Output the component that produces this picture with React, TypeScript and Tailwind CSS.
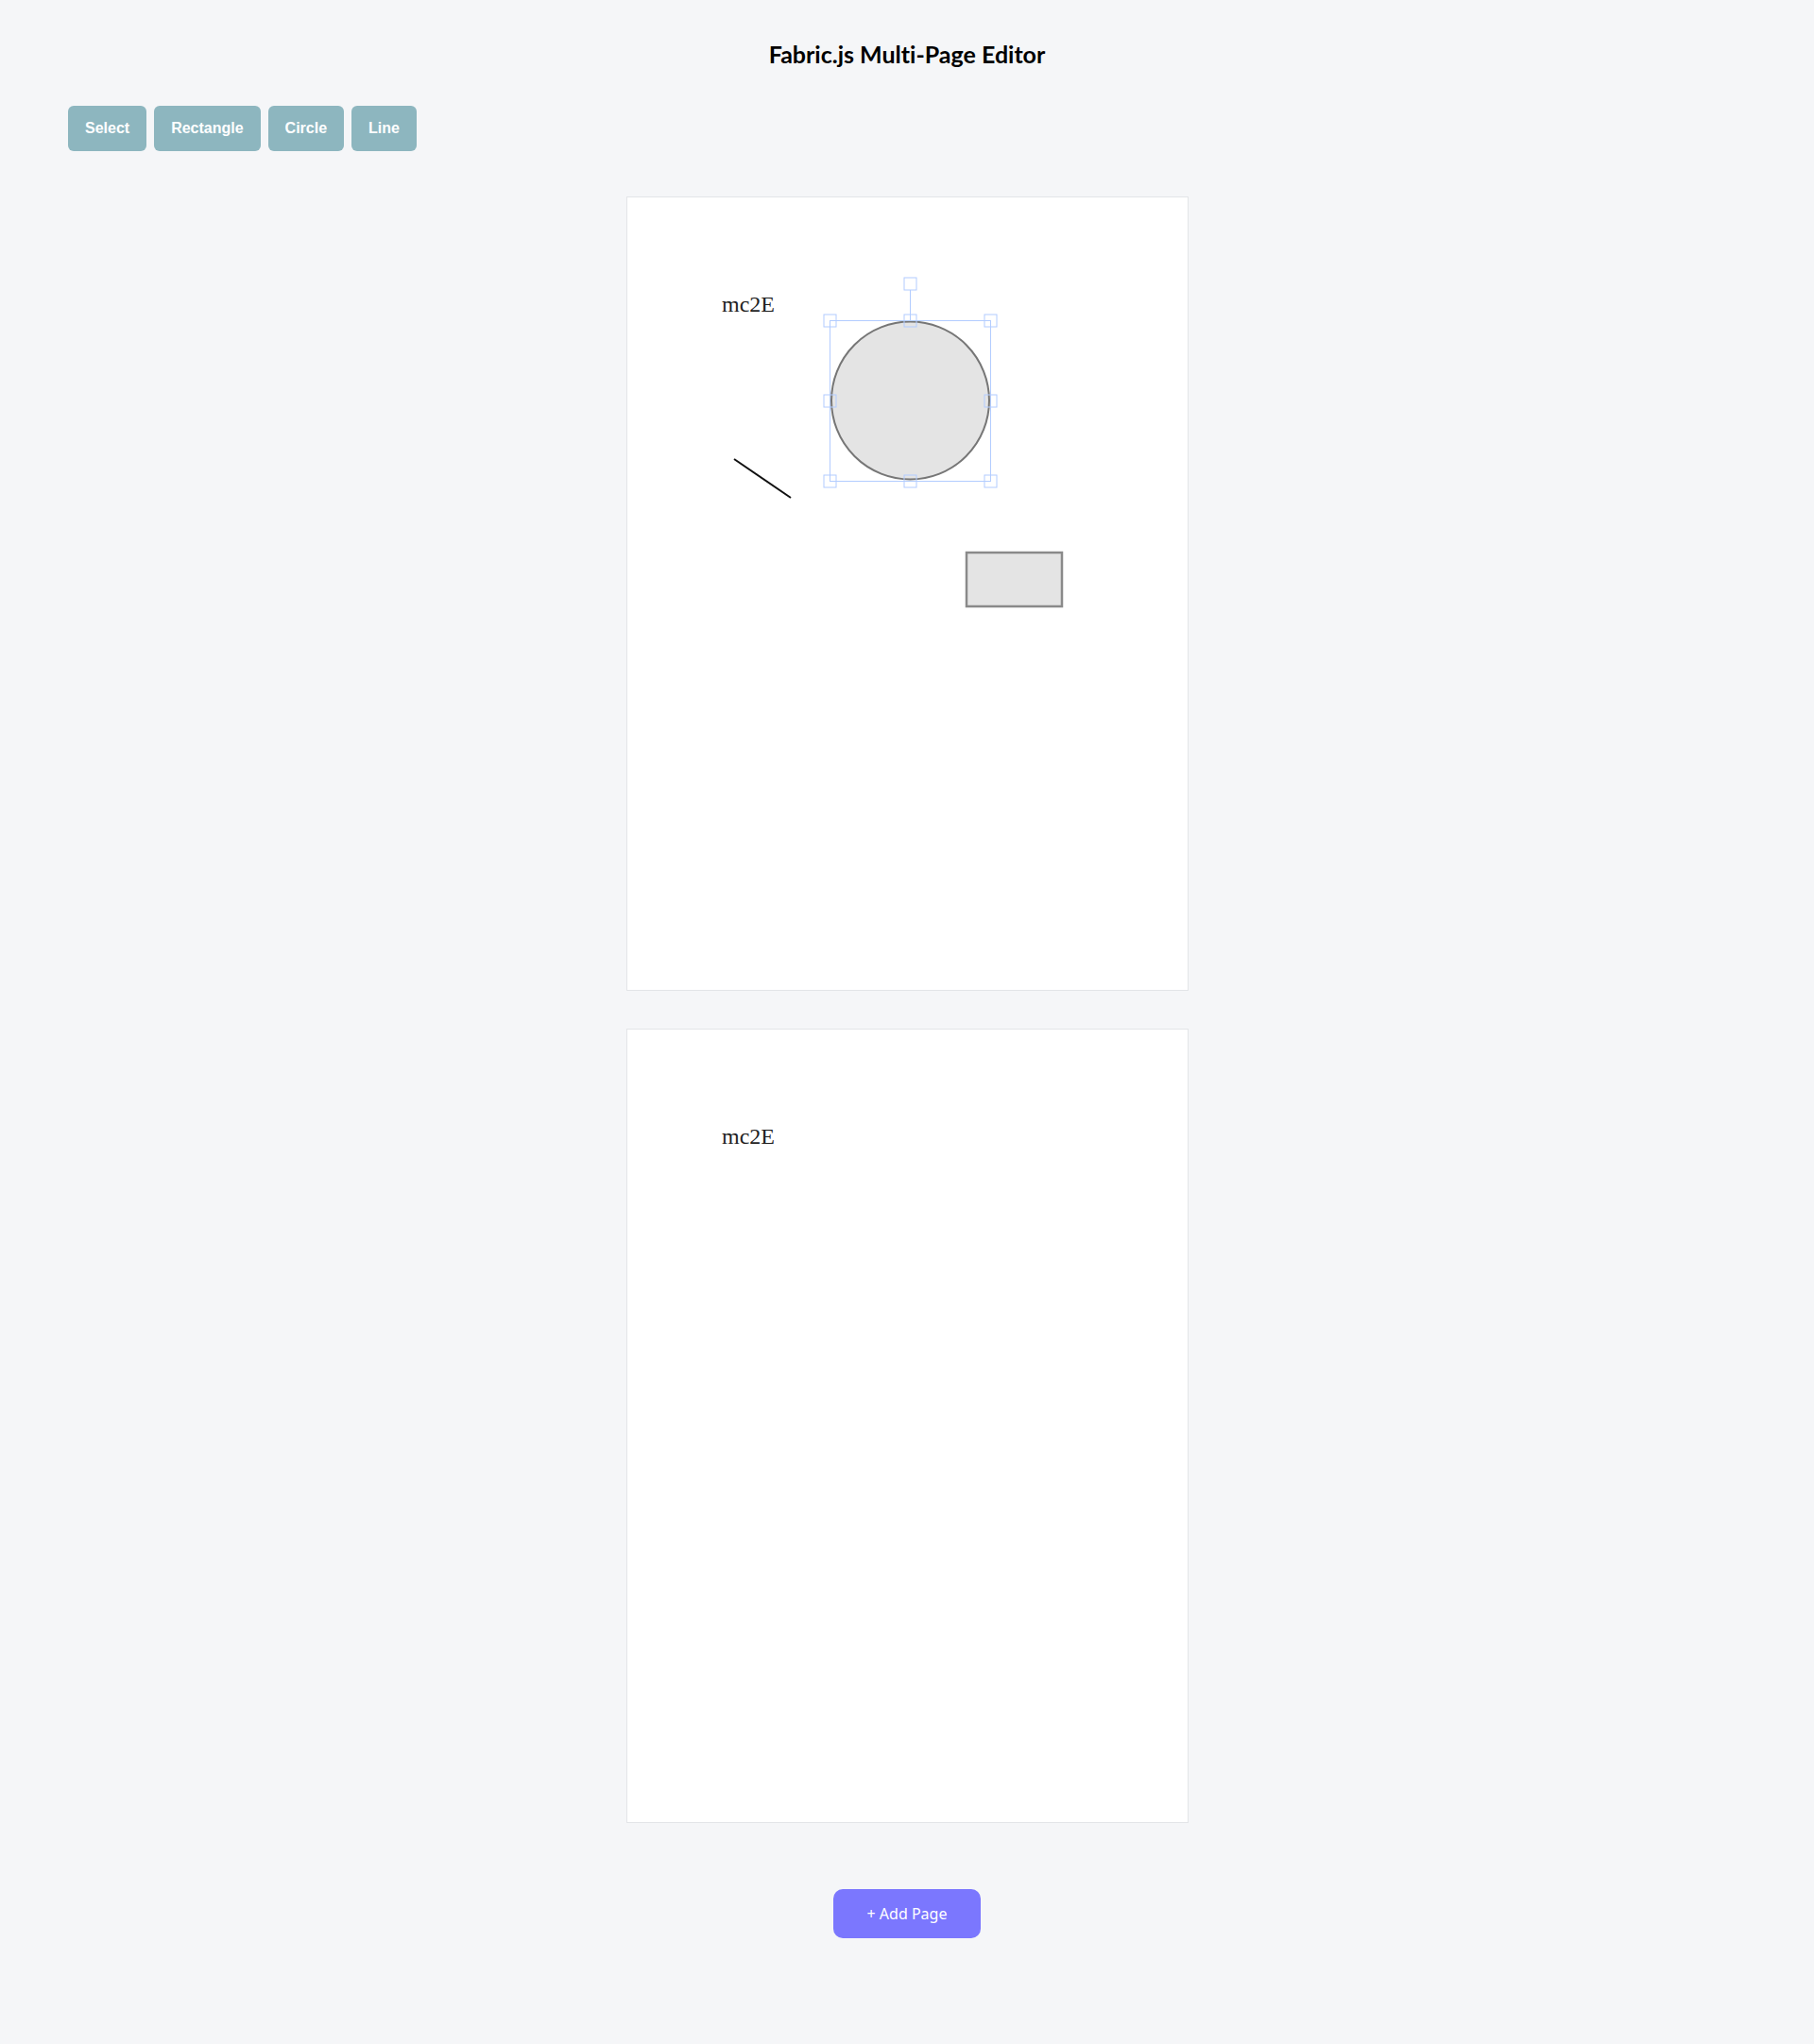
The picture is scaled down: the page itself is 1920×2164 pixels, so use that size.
import React from "react";

const handleCenters: [number, number][] = [
  [214.5, 130.5],
  [299.5, 130.5],
  [384.5, 130.5],
  [214.5, 215.5],
  [384.5, 215.5],
  [214.5, 300.5],
  [299.5, 300.5],
  [384.5, 300.5],
  [299.5, 91.5],
];

function PageOne() {
  return (
    <svg width="593" height="839" className="block">
      <text
        x="100"
        y="121"
        fontFamily="'Liberation Serif', 'Times New Roman', serif"
        fontSize="24"
        fill="#1f1f1f"
      >
        mc2E
      </text>
      <line x1="113" y1="277" x2="173" y2="318" stroke="#111" strokeWidth="2" />
      <circle cx="299.5" cy="215" r="83.5" fill="#e4e4e4" stroke="#767676" strokeWidth="2" />
      <rect x="359" y="376" width="101" height="57" fill="#e4e4e4" stroke="#8a8a8a" strokeWidth="2.5" />
      {/* selection */}
      <rect x="214.5" y="130.5" width="170" height="170" fill="none" stroke="#b2ccff" strokeWidth="1" />
      <line x1="299.5" y1="98" x2="299.5" y2="130.5" stroke="#b2ccff" strokeWidth="1" />
      {handleCenters.map(([cx, cy], i) => (
        <rect
          key={i}
          x={cx - 6.5}
          y={cy - 6.5}
          width="13"
          height="13"
          fill="none"
          stroke="#b2ccff"
          strokeWidth="1"
        />
      ))}
    </svg>
  );
}

function PageTwo() {
  return (
    <svg width="593" height="839" className="block">
      <text
        x="100"
        y="121"
        fontFamily="'Liberation Serif', 'Times New Roman', serif"
        fontSize="24"
        fill="#1f1f1f"
      >
        mc2E
      </text>
    </svg>
  );
}

export default function App() {
  const tools = ["Select", "Rectangle", "Circle", "Line"];
  return (
    <div className="min-h-[2164px] w-full bg-[#f5f6f8] pt-[41px] pb-[112px]">
      <h1 className="text-center text-[25px] leading-[32px] font-bold text-black font-['Lato','Noto_Sans',sans-serif] [font-variant-ligatures:none]">
        Fabric.js Multi-Page Editor
      </h1>
      <div className="mt-[39px] flex gap-[8px] pl-[72px]">
        {tools.map((t) => (
          <button
            key={t}
            className="h-[48px] rounded-[6px] bg-[#8db6bf] px-[18px] text-[16px] font-bold text-white font-['Liberation_Sans',Arial,sans-serif]"
          >
            {t}
          </button>
        ))}
      </div>
      <div className="mt-[48px] flex flex-col items-center gap-[40px]">
        <div className="w-[595px] h-[841px] border border-[#e3e5e8] bg-white">
          <PageOne />
        </div>
        <div className="w-[595px] h-[841px] border border-[#e3e5e8] bg-white">
          <PageTwo />
        </div>
      </div>
      <div className="mt-[70px] flex justify-center">
        <button className="h-[52px] w-[156px] rounded-[10px] bg-[#7b77fe] text-[16px] text-white font-['Noto_Sans','Open_Sans',sans-serif]">
          + Add Page
        </button>
      </div>
    </div>
  );
}
